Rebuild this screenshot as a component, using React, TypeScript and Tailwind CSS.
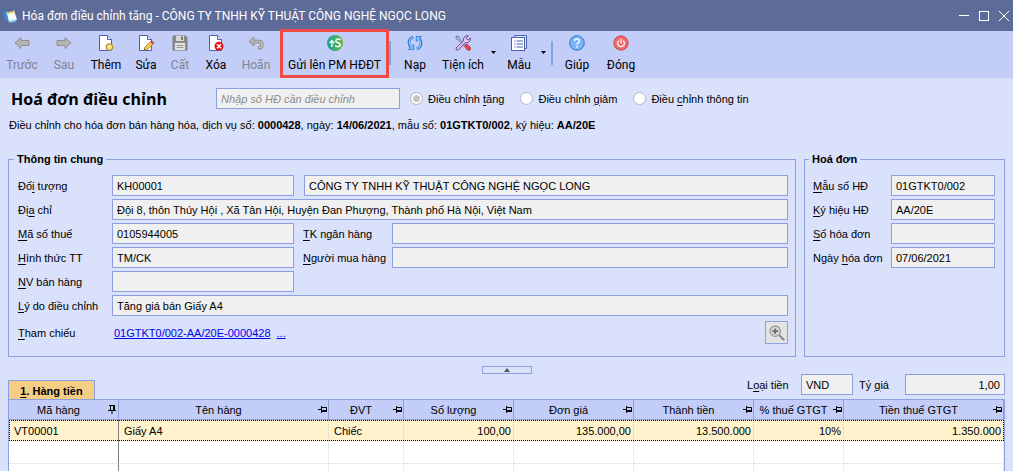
import type { ReactNode } from 'react'
import clsx from 'clsx'

const arrow = 'M1 8 L7 2.5 V5.5 H15 V10.5 H7 V13.5 Z'

// blank page shared by the add / edit / delete icons
function PageShape() {
  return (
    <>
      <path d="M1.5 .5 H9.5 L13.5 4.5 V15.5 H1.5 Z" fill="#fff" stroke="#4a61ad" />
      <path d="M9.5 .5 V4.5 H13.5" fill="#dfe6fb" stroke="#4a61ad" />
    </>
  )
}

function Icon({ children, size = 'size-4' }: { children: ReactNode; size?: string }) {
  return (
    <svg viewBox="0 0 16 16" className={clsx('shrink-0', size)} fill="none" aria-hidden="true">
      {children}
    </svg>
  )
}

const icons: Record<string, ReactNode> = {
  back: <path d={arrow} fill="#b4b4b4" stroke="#909090" strokeLinejoin="round" />,
  next: <path d={arrow} transform="matrix(-1 0 0 1 16 0)" fill="#b4b4b4" stroke="#909090" strokeLinejoin="round" />,
  add: (
    <>
      <PageShape />
      <circle cx="11.5" cy="12" r="3.2" fill="#fbe58c" stroke="#b8952f" strokeWidth="1.3" />
    </>
  ),
  edit: (
    <>
      <PageShape />
      <path d="M6 15.5 L7 12 L12.5 6.8 L15 9.2 L9.5 14.5 Z" fill="#f3c755" stroke="#a87828" strokeWidth=".8" />
      <path d="M12.5 6.8 L13.6 6 Q16 6.5 15.8 8.4 L15 9.2 Z" fill="#e85454" stroke="#b03030" strokeWidth=".6" />
      <path d="M6 15.5 L6.5 13.8 L7.8 15 Z" fill="#333" />
    </>
  ),
  save: (
    <>
      <path d="M1 1 H13.5 L15 2.5 V15 H1 Z" fill="#8c8c8c" stroke="#7c7c7c" />
      <rect x="4" y="1" width="8" height="5" fill="#d8d8d8" />
      <rect x="9" y="1.5" width="2" height="3.5" fill="#777" />
      <rect x="3" y="8" width="10" height="7" fill="#e2e2e2" />
      <path d="M4.5 10.5 H11.5 M4.5 12.5 H11.5" stroke="#999" />
    </>
  ),
  remove: (
    <>
      <PageShape />
      <circle cx="11" cy="11.3" r="4.5" fill="#e8141c" />
      <path d="M9 9.3 L13 13.3 M13 9.3 L9 13.3" stroke="#fff" strokeWidth="1.5" />
    </>
  ),
  undo: (
    <>
      <path d="M5 6.5 H11 Q14 6.5 14 9.7 Q14 13 10 13" stroke="#8f8f8f" strokeWidth="3.4" />
      <path d="M6 2 V11 L1 6.5 Z" fill="#b4b4b4" stroke="#8f8f8f" strokeLinejoin="round" />
      <path d="M5 6.5 H11 Q14 6.5 14 9.7 Q14 13 10.5 13" stroke="#c0c0c0" strokeWidth="1.6" />
    </>
  ),
  reload: (
    <>
      <path d="M6.2 2 Q1.8 4 2 8 Q2.2 11 4.2 12.8" stroke="#2878d0" strokeWidth="2.8" />
      <path d="M1.5 14.5 H6.8 V9.5 Z" fill="#7fc0fa" stroke="#2878d0" strokeWidth=".8" />
      <path d="M6 2.3 Q2.3 4 2.4 8 Q2.6 10.8 4.8 12.8" stroke="#8fcbff" strokeWidth="1.2" />
      <path d="M9.8 14 Q14.2 12 14 8 Q13.8 5 11.8 3.2" stroke="#2878d0" strokeWidth="2.8" />
      <path d="M14.5 1.5 H9.2 V6.5 Z" fill="#7fc0fa" stroke="#2878d0" strokeWidth=".8" />
      <path d="M10 13.7 Q13.7 12 13.6 8 Q13.4 5.2 11.2 3.2" stroke="#8fcbff" strokeWidth="1.2" />
    </>
  ),
  tools: (
    <>
      <path d="M1 1 L3.5 1.5 L4.5 3.5 L10 9.5 L9 10.5 L3 4.8 L1.3 3.8 Z" fill="#b8c0e0" stroke="#5a659c" strokeWidth=".8" />
      <path d="M9.5 11 L11.5 9 L15 12 Q16 14 15 15 Q13.5 15.8 12 14.5 Z" fill="#e84848" stroke="#a82030" strokeWidth=".8" />
      <path d="M1 13 L8.6 6 Q8 3 10 1.4 Q11.5 .3 13.5 .8 L11 3.2 L13 5.2 L15.4 3 Q16 6 13.6 7.3 Q12 8 10.3 7.5 L3.2 15.2 Q1 15.5 1 13 Z" fill="#e0cdf0" stroke="#6b4397" />
    </>
  ),
  form: (
    <>
      <path d="M3.5 2.5 V.5 H15.5 V13.5 H13.5" fill="#dfe6fb" stroke="#4a61ad" />
      <rect x=".5" y="2.5" width="13" height="13" fill="#fff" stroke="#4a61ad" />
      <path d="M3 6 H4.5 M3 9 H4.5 M3 12 H4.5" stroke="#6b86d8" />
      <path d="M5.5 6 H12 M5.5 9 H12 M5.5 12 H12" stroke="#4a61ad" />
    </>
  ),
  help: (
    <>
      <circle cx="8" cy="8" r="7.3" fill="#7db5fb" stroke="#2f78d0" />
      <path d="M5.7 6 Q5.7 3.8 8 3.8 Q10.4 3.8 10.4 5.9 Q10.4 7 9 7.9 Q8 8.6 8 9.7" stroke="#fff" strokeWidth="1.3" />
      <circle cx="8" cy="11.8" r=".9" fill="#fff" />
    </>
  ),
  close: (
    <>
      <circle cx="8" cy="8" r="7.1" fill="#f56a6a" stroke="#cf3c40" />
      <path d="M5.8 5.6 A3.4 3.4 0 1 0 10.2 5.6 M8 3.8 V8.2" stroke="#fff" strokeWidth="1.2" />
    </>
  ),
  send: (
    <>
      <defs>
        <linearGradient id="sendFill" x1="0" y1="0" x2="1" y2="0">
          <stop offset="0" stopColor="#16a0a4" />
          <stop offset="1" stopColor="#67b932" />
        </linearGradient>
      </defs>
      <circle cx="8" cy="8" r="8" fill="url(#sendFill)" />
      <path d="M4.9 12 V6 M2.6 8 L4.9 5.6 L7.2 8" stroke="#fff" strokeWidth="1.4" />
      <path d="M13.4 5 Q12.4 3.9 10.8 4 Q8.8 4.2 8.8 5.9 Q8.8 7.2 11 7.7 Q13.3 8.3 13.3 9.9 Q13.1 11.7 10.9 11.7 Q9.2 11.7 8.2 10.5" stroke="#fff" strokeWidth="1.5" />
    </>
  ),
}

type Tool = { id: string; label: string; width: string; disabled?: boolean; menu?: boolean }

const tools: Tool[] = [
  { id: 'back', label: 'Trước', width: 'w-11', disabled: true },
  { id: 'next', label: 'Sau', width: 'w-10', disabled: true },
  { id: 'add', label: 'Thêm', width: 'w-11' },
  { id: 'edit', label: 'Sửa', width: 'w-9' },
  { id: 'save', label: 'Cất', width: 'w-8', disabled: true },
  { id: 'remove', label: 'Xóa', width: 'w-10' },
  { id: 'undo', label: 'Hoãn', width: 'w-10', disabled: true },
]

const moreTools: Tool[] = [
  { id: 'reload', label: 'Nạp', width: 'w-10' },
  { id: 'tools', label: 'Tiện ích', width: 'w-14', menu: true },
  { id: 'form', label: 'Mẫu', width: 'w-11', menu: true },
]

const lastTools: Tool[] = [
  { id: 'help', label: 'Giúp', width: 'w-11' },
  { id: 'close', label: 'Đóng', width: 'w-11' },
]

function ToolButton({ tool }: { tool: Tool }) {
  return (
    <>
      <button
        disabled={tool.disabled}
        className={clsx('flex shrink-0 flex-col items-center gap-1 whitespace-nowrap', tool.width, tool.disabled && 'text-[#80838f]')}
      >
        <Icon>{icons[tool.id]}</Icon>
        <span>{tool.label}</span>
      </button>
      {tool.menu && (
        <button aria-label={`${tool.label} menu`} className="-ml-0.5 flex w-2 shrink-0 justify-center pt-4">
          <svg viewBox="0 0 5 3" className="h-[3px] w-[5px]"><path d="M0 0 H5 L2.5 3 Z" fill="#000" /></svg>
        </button>
      )}
    </>
  )
}

function Separator() {
  return <span className="mt-1.5 h-6 w-0.5 shrink-0 bg-[#7fa6dc]" />
}

// "_" marks the access key letter
function KeyText({ text }: { text: string }) {
  const i = text.indexOf('_')
  if (i < 0) return <>{text}</>
  return (
    <>
      {text.slice(0, i)}
      <span className="underline underline-offset-2">{text[i + 1]}</span>
      {text.slice(i + 2)}
    </>
  )
}

const box = 'h-[21px] min-w-0 border border-[#8e9fdf] bg-[#f0f0f0] px-1 outline-none'

function Field({ id, label, value = '', labelWidth = 'w-[94px]', width = 'flex-1' }: {
  id: string; label: string; value?: string; labelWidth?: string; width?: string
}) {
  return (
    <>
      <label htmlFor={id} className={clsx('shrink-0 whitespace-nowrap', labelWidth)}><KeyText text={label} /></label>
      <input id={id} readOnly value={value} className={clsx(box, width)} />
    </>
  )
}

function Row({ children }: { children: ReactNode }) {
  return <div className="flex items-center">{children}</div>
}

const kinds = ['Điều chỉnh _tăng', 'Điều chỉnh _giảm', 'Điều _chỉnh thông tin']

const columns = [
  { title: 'Mã hàng', width: 'w-[110px]', value: 'VT00001' },
  { title: 'Tên hàng', width: '', value: 'Giấy A4' },
  { title: 'ĐVT', width: 'w-[75px]', value: 'Chiếc' },
  { title: 'Số lượng', width: 'w-[110px]', value: '100,00', right: true },
  { title: 'Đơn giá', width: 'w-[120px]', value: '135.000,00', right: true },
  { title: 'Thành tiền', width: 'w-[120px]', value: '13.500.000', right: true },
  { title: '% thuế GTGT', width: 'w-[90px]', value: '10%', right: true },
  { title: 'Tiền thuế GTGT', width: 'w-[160px]', value: '1.350.000', right: true },
]

function Pin({ pinned }: { pinned?: boolean }) {
  // a fixed column has its pin pointing down
  const d = pinned
    ? 'M1 .5 H7 M2.5 .5 V5 M5.5 .5 V5 M6.5 .5 V5 M0 5.5 H8 M4 6 V9'
    : 'M0 4.5 H3 M3.5 1 V8 M3.5 2.5 H8.5 V6 M3.5 5.5 H9 M3.5 6.5 H9'
  return (
    <svg viewBox="0 0 9 9" className="size-[9px] shrink-0" fill="none" stroke="#000" aria-hidden="true">
      <path d={d} />
    </svg>
  )
}

export default function App() {
  return (
    <div className="flex h-screen flex-col overflow-hidden bg-[#dae1fb] font-['Liberation_Sans',sans-serif] text-[11px] leading-4 text-black">
      <header className="flex h-[31px] shrink-0 items-center bg-[#5d6b98] pl-1 pr-1 font-['Roboto',sans-serif] text-xs text-white">
        <svg viewBox="0 0 14 14" className="size-3.5 shrink-0" aria-hidden="true">
          <path d="M0 3 L3 1 L6 12 L1 11 Z" fill="#2f8fe0" />
          <path d="M2.5 3 L10 1.5 L13 10.5 L5 12.5 Z" fill="#f4fbff" />
          <path d="M2.5 3 L10 1.5 L10.7 3.8 L3.2 5.3 Z" fill="#f6d860" />
          <path d="M4 1.5 V3.5 M6 1.2 V3 M8.3 .8 V2.6" stroke="#3b4a70" />
          <path d="M5 12.5 L13 10.5 L11 13 L4 13.5 Z" fill="#7ed0f6" />
        </svg>
        <h1 className="flex-1 pl-1 whitespace-nowrap">Hóa đơn điều chỉnh tăng - CÔNG TY TNHH KỸ THUẬT CÔNG NGHỆ NGỌC LONG</h1>
        <div className="flex items-center gap-2.5">
          <button aria-label="Minimize"><svg viewBox="0 0 10 10" className="size-2.5"><path d="M0 4.5 H10" stroke="#fff" /></svg></button>
          <button aria-label="Maximize"><svg viewBox="0 0 10 10" className="size-2.5" fill="none"><rect x=".5" y=".5" width="9" height="9" stroke="#fff" /></svg></button>
          <button aria-label="Close"><svg viewBox="0 0 10 10" className="size-2.5"><path d="M0 0 L10 10 M10 0 L0 10" stroke="#fff" /></svg></button>
        </div>
      </header>

      <nav className="flex h-[47px] shrink-0 items-start bg-[#c2cef8] pt-1 font-['Roboto',sans-serif] text-xs leading-5">
        {tools.map(t => <ToolButton key={t.id} tool={t} />)}
        <button className="relative ml-1 flex w-[109px] shrink-0 flex-col items-center gap-1 whitespace-nowrap">
          <Icon>{icons.send}</Icon>
          <span>Gửi lên PM HĐĐT</span>
          <span className="absolute inset-x-0 -top-1.5 h-[49px] border-3 border-[#ee4b45]" />
        </button>
        <Separator />
        <span className="w-1" />
        {moreTools.map(t => <ToolButton key={t.id} tool={t} />)}
        <span className="w-1" />
        <Separator />
        <span className="w-0.5" />
        {lastTools.map(t => <ToolButton key={t.id} tool={t} />)}
      </nav>

      <main className="flex min-h-0 flex-1 flex-col px-2 pt-2.5">
        <div className="flex items-center">
          <h2 className="w-52 shrink-0 pl-[3px] font-['Open_Sans',sans-serif] text-base leading-5 font-bold whitespace-nowrap">Hoá đơn điều chỉnh</h2>
          <input aria-label="Nhập số HĐ cần điều chỉnh" placeholder="Nhập số HĐ cần điều chỉnh" className={clsx(box, 'w-[184px] italic placeholder:text-[#8a8a8a]')} />
          <div className="ml-2.5 flex gap-4">
            {kinds.map((k, i) => (
              <label key={k} className="flex items-center gap-[5px] whitespace-nowrap">
                <input
                  type="radio"
                  name="kind"
                  defaultChecked={i === 0}
                  className="size-[13px] appearance-none rounded-full border border-[#b4b9cc] bg-white checked:bg-[#c4c4c4] checked:shadow-[inset_0_0_0_2px_#fff]"
                />
                <span><KeyText text={k} /></span>
              </label>
            ))}
          </div>
        </div>
        <p className="mt-2 pl-px whitespace-nowrap">
          Điều chỉnh cho hóa đơn bán hàng hóa, dịch vụ số: <b>0000428</b>, ngày: <b>14/06/2021</b>, mẫu số: <b>01GTKT0/002</b>, ký hiệu: <b>AA/20E</b>
        </p>

        <div className="mt-[18px] flex items-stretch gap-2">
          <fieldset className="flex min-w-0 flex-1 flex-col gap-[3px] border border-[#8e9fdf] pt-2 pr-[7px] pb-3 pl-[9px]">
            <legend className="-ml-1 px-[3px] font-bold">Thông tin chung</legend>
            <Row>
              <Field id="code" label="Đố_i tượng" value="KH00001" width="w-[182px]" />
              <input aria-label="Tên đối tượng" readOnly value="CÔNG TY TNHH KỸ THUẬT CÔNG NGHỆ NGỌC LONG" className={clsx(box, 'ml-2.5 flex-1')} />
            </Row>
            <Row><Field id="address" label="Đị_a chỉ" value="Đội 8, thôn Thúy Hội , Xã Tân Hội, Huyện Đan Phượng, Thành phố Hà Nội, Việt Nam" /></Row>
            <Row>
              <Field id="tax" label="_Mã số thuế" value="0105944005" width="mr-[9px] w-[182px]" />
              <Field id="bank" label="_TK ngân hàng" labelWidth="w-[89px]" />
            </Row>
            <Row>
              <Field id="pay" label="_Hình thức TT" value="TM/CK" width="mr-[9px] w-[182px]" />
              <Field id="buyer" label="_Người mua hàng" labelWidth="w-[89px]" />
            </Row>
            <Row><Field id="seller" label="_NV bán hàng" width="w-[182px]" /></Row>
            <Row><Field id="reason" label="_Lý do điều chỉnh" value="Tăng giá bán Giấy A4" /></Row>
            <div className="mt-0.5 flex items-center">
              <span className="w-24 shrink-0"><KeyText text="_Tham chiếu" /></span>
              <a href="#ref" className="text-[#0000ee] underline">01GTKT0/002-AA/20E-0000428</a>
              <a href="#more" className="ml-1.5 text-[#0000ee] underline">...</a>
              <button aria-label="Tìm" className="ml-auto flex size-[23px] items-center justify-center border border-[#8e9fdf] bg-[#e4e4e4]">
                <Icon>
                  <circle cx="6.2" cy="6.2" r="5.2" fill="#d6d6d6" stroke="#9a9a9a" strokeWidth="1.3" />
                  <path d="M6.2 3.4 V9 M3.4 6.2 H9" stroke="#6a6a6a" strokeWidth="1.7" />
                  <path d="M10.2 10.2 L15.2 15.2" stroke="#8e8e8e" strokeWidth="2.2" />
                </Icon>
              </button>
            </div>
          </fieldset>

          <fieldset className="flex w-[201px] min-w-0 shrink-0 flex-col gap-[3px] border border-[#8e9fdf] pt-2 pr-[9px] pl-2">
            <legend className="-ml-1 px-[3px] font-bold">Hoá đơn</legend>
            <Row><Field id="form-no" label="_Mẫu số HĐ" value="01GTKT0/002" labelWidth="w-[78px]" /></Row>
            <Row><Field id="serial" label="_Ký hiệu HĐ" value="AA/20E" labelWidth="w-[78px]" /></Row>
            <Row><Field id="number" label="_Số hóa đơn" labelWidth="w-[78px]" /></Row>
            <Row><Field id="date" label="Ngày _hóa đơn" value="07/06/2021" labelWidth="w-[78px]" /></Row>
          </fieldset>
        </div>

        <button aria-label="Thu gọn" className="mt-[9px] flex h-2 w-[50px] shrink-0 items-center justify-center self-center border border-[#8e9fdf]">
          <svg viewBox="0 0 6 4" className="h-1 w-1.5"><path d="M3 0 L6 4 H0 Z" fill="#555" /></svg>
        </button>

        <div className="flex items-end justify-between">
          <button className="-mb-px h-5 w-[87px] border border-b-0 border-[#8e9fdf] bg-[#f5cd85] font-bold"><KeyText text="_1. Hàng tiền" /></button>
          <div className="mb-1 flex items-center">
            <label htmlFor="currency" className="w-[54px]"><KeyText text="L_oại tiền" /></label>
            <input id="currency" readOnly value="VND" className={clsx(box, 'w-[52px]')} />
            <label htmlFor="rate" className="ml-1.5 w-[46px]"><KeyText text="Tỷ _giá" /></label>
            <input id="rate" readOnly value="1,00" className={clsx(box, 'w-[100px] text-right')} />
          </div>
        </div>

        <div className="min-h-0 flex-1 overflow-hidden border border-b-0 border-[#8e9fdf] bg-white">
          <table className="w-full table-fixed border-separate border-spacing-0">
            <thead>
              <tr className="h-5 bg-[#c2cef8]">
                {columns.map((c, i) => (
                  <th key={c.title} className={clsx('border-r border-b border-[#8e9fdf] p-0 pr-px font-normal', c.width)}>
                    <div className="flex items-center">
                      <span className="flex-1 whitespace-nowrap">{c.title}</span>
                      <Pin pinned={i === 0} />
                    </div>
                  </th>
                ))}
              </tr>
            </thead>
            <tbody>
              <tr className="h-[21px] bg-[#fff2cc] outline-1 -outline-offset-1 outline-black outline-dotted">
                {columns.map((c, i) => (
                  <td key={c.title} className={clsx('border-r p-0', i === 0 ? 'border-[#808080]' : 'border-dotted border-[#d0d0d0]', c.right ? 'pr-0.5 text-right' : 'pl-[5px]')}>
                    {c.value}
                  </td>
                ))}
              </tr>
              {[0, 1].map(r => (
                <tr key={r} className="h-[23px]">
                  {columns.map((c, i) => (
                    <td key={c.title} className={clsx('border-r border-b border-b-[#d8d8d8] p-0 [border-bottom-style:dotted]', i === 0 ? 'border-r-[#808080]' : 'border-r-[#d8d8d8] [border-right-style:dotted]')} />
                  ))}
                </tr>
              ))}
            </tbody>
          </table>
        </div>
      </main>
    </div>
  )
}
